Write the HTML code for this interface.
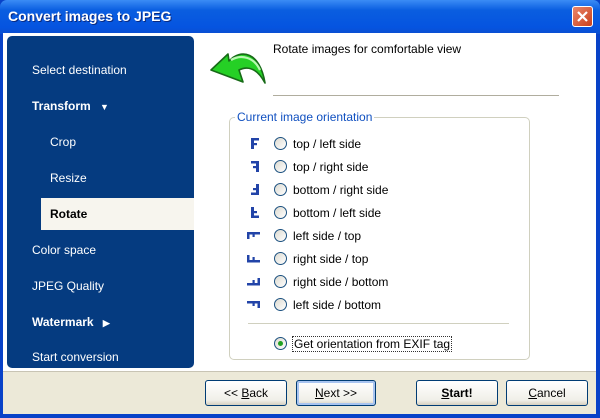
<!DOCTYPE html>
<html><head><style>
*{margin:0;padding:0;box-sizing:border-box}
body{width:600px;height:418px;position:relative;overflow:hidden;background:#0842c8;font-family:"Liberation Sans",sans-serif;font-size:12px}
.title{position:absolute;left:0;top:0;width:600px;height:34px;background:linear-gradient(#3b8cf5,#0a5ee0 30%,#0554e0 80%,#0a4ed0);border-radius:7px 7px 0 0}
.title span{position:absolute;left:8px;top:8px;color:#fff;font-weight:bold;font-size:14px;text-shadow:1px 1px #0a2a80}
.close{position:absolute;left:572px;top:6px;width:21px;height:21px;background:linear-gradient(135deg,#e9866a,#c9401c);border:1px solid #fff;border-radius:3px}
.body{position:absolute;left:3px;top:33px;width:593px;height:381px;background:#ece9d8}
.white{position:absolute;left:3px;top:33px;width:593px;height:339px;background:#fff;border-bottom:1px solid #c8c4b4}
.panel{position:absolute;left:7px;top:36px;width:187px;height:332px;background:#053b80;border-radius:5px}
.nav{position:absolute;color:#fff;font-size:12px}
.b{font-weight:bold}
.sel{position:absolute;left:41px;top:198px;width:153px;height:32px;background:#f7f5ee}
.hdr{position:absolute;left:273px;top:42px;font-size:12px}
.line{position:absolute;background:#b0ad9e;height:1px}
.gb{position:absolute;left:229px;top:117px;width:301px;height:243px;border:1px solid #d0d0bf;border-radius:5px}
.gbl{position:absolute;left:235px;top:110px;background:#fff;color:#1050c0;padding:0 2px}
.r{position:absolute;left:274px;width:13px;height:13px;border:1px solid #1c5180;border-radius:50%;background:linear-gradient(135deg,#dcdad0,#fff)}
.t{position:absolute;left:293px;font-size:12px}
.ic{position:absolute;left:246px}
.btn{position:absolute;top:380px;height:26px;border:1px solid #003c74;border-radius:3px;background:linear-gradient(#fff,#f0efe8 80%,#d6d0c0);text-align:center;line-height:24px;font-size:12px}
</style></head><body>
<div class="title"><span>Convert images to JPEG</span><div class="close"><svg width="19" height="19"><path d="M5 5L14 14M14 5L5 14" stroke="#fff" stroke-width="2.2"/></svg></div></div>
<div class="body"></div>
<div class="white"></div>
<div class="panel"></div>
<div class="sel"></div>
<div class="nav" style="left:32px;top:63px">Select destination</div>
<div class="nav b" style="left:32px;top:99px">Transform <span style="font-size:9px;margin-left:6px">▼</span></div>
<div class="nav" style="left:50px;top:135px">Crop</div>
<div class="nav" style="left:50px;top:171px">Resize</div>
<div class="nav b" style="left:50px;top:207px;color:#000">Rotate</div>
<div class="nav" style="left:32px;top:243px">Color space</div>
<div class="nav" style="left:32px;top:279px">JPEG Quality</div>
<div class="nav b" style="left:32px;top:315px">Watermark <span style="font-size:9px;margin-left:6px">▶</span></div>
<div class="nav" style="left:32px;top:350px">Start conversion</div>
<svg style="position:absolute;left:208px;top:46px" width="62" height="42"><path d="M3 24 L20 8 L21 15 C33 2 52 6 57 37 C50 24 41 19 31 24 L35 36 Z" fill="#25d025" stroke="#176a17" stroke-width="1.6" stroke-linejoin="round"/><path d="M23 14 C33 8 46 11 52 24" stroke="#b8f8b0" stroke-width="2.2" fill="none"/></svg>
<div class="hdr">Rotate images for comfortable view</div>
<div class="line" style="left:273px;top:95px;width:286px"></div>
<div class="gb"></div>
<div class="gbl">Current image orientation</div>
<svg class="ic" style="top:137px" width="16" height="13" fill="#2244a8"><rect x="5" y="1" width="3" height="11"/><rect x="5" y="1" width="8" height="2.5"/><rect x="5" y="6" width="6" height="2.2"/></svg>
<div class="r" style="top:137px"></div><div class="t" style="top:137px">top / left side</div>
<svg class="ic" style="top:160px" width="16" height="13" fill="#2244a8"><rect x="10" y="1" width="3" height="11"/><rect x="5" y="1" width="8" height="2.5"/><rect x="7" y="6" width="6" height="2.2"/></svg>
<div class="r" style="top:160px"></div><div class="t" style="top:160px">top / right side</div>
<svg class="ic" style="top:183px" width="16" height="13" fill="#2244a8"><rect x="10" y="1" width="3" height="11"/><rect x="5" y="9.5" width="8" height="2.5"/><rect x="7" y="5" width="6" height="2.2"/></svg>
<div class="r" style="top:183px"></div><div class="t" style="top:183px">bottom / right side</div>
<svg class="ic" style="top:206px" width="16" height="13" fill="#2244a8"><rect x="5" y="1" width="3" height="11"/><rect x="5" y="9.5" width="8" height="2.5"/><rect x="5" y="5" width="6" height="2.2"/></svg>
<div class="r" style="top:206px"></div><div class="t" style="top:206px">bottom / left side</div>
<svg class="ic" style="top:229px" width="16" height="13" fill="#2244a8"><rect x="1" y="3" width="13" height="2.5"/><rect x="1" y="3" width="2.5" height="7"/><rect x="6.5" y="3" width="2.2" height="5"/></svg>
<div class="r" style="top:229px"></div><div class="t" style="top:229px">left side / top</div>
<svg class="ic" style="top:252px" width="16" height="13" fill="#2244a8"><rect x="1" y="8" width="13" height="2.5"/><rect x="1" y="3" width="2.5" height="7"/><rect x="6.5" y="5" width="2.2" height="5"/></svg>
<div class="r" style="top:252px"></div><div class="t" style="top:252px">right side / top</div>
<svg class="ic" style="top:275px" width="16" height="13" fill="#2244a8"><rect x="1" y="8" width="13" height="2.5"/><rect x="11.5" y="3" width="2.5" height="7"/><rect x="6.5" y="5" width="2.2" height="5"/></svg>
<div class="r" style="top:275px"></div><div class="t" style="top:275px">right side / bottom</div>
<svg class="ic" style="top:298px" width="16" height="13" fill="#2244a8"><rect x="1" y="3" width="13" height="2.5"/><rect x="11.5" y="3" width="2.5" height="7"/><rect x="6.5" y="3" width="2.2" height="5"/></svg>
<div class="r" style="top:298px"></div><div class="t" style="top:298px">left side / bottom</div>
<div class="line" style="left:248px;top:323px;width:261px;background:#d0d0bf"></div>
<div class="r" style="top:337px"><div style="position:absolute;left:3px;top:3px;width:5px;height:5px;border-radius:50%;background:#21a121"></div></div>
<div class="t" style="top:336px;border:1px dotted #333;padding:0 1px;left:292px">Get orientation from EXIF tag</div>
<div class="btn" style="left:205px;width:82px">&lt;&lt; <u>B</u>ack</div>
<div class="btn" style="left:296px;width:80px;box-shadow:inset 0 0 0 2px #a8c4f0"><u>N</u>ext &gt;&gt;</div>
<div class="btn" style="left:416px;width:82px;font-weight:bold"><u>S</u>tart!</div>
<div class="btn" style="left:506px;width:82px"><u>C</u>ancel</div>
</body></html>
